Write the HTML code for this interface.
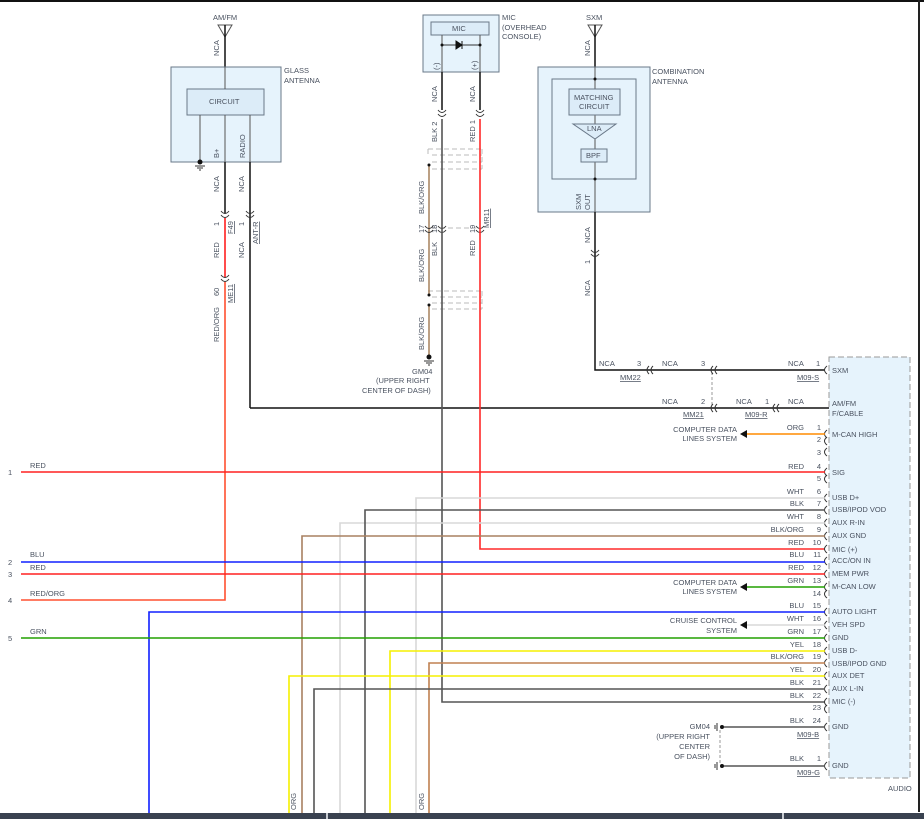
<!DOCTYPE html>
<html><head><meta charset="utf-8"><style>
html,body{margin:0;padding:0;background:#fff;}
svg{display:block;font-family:"Liberation Sans",sans-serif;}
text{fill:#4a5260;font-size:7.5px;}
</style></head><body>
<svg width="924" height="819" viewBox="0 0 924 819" xmlns="http://www.w3.org/2000/svg">
<rect x="0" y="0" width="924" height="2" fill="#111"/>
<rect x="918" y="0" width="2" height="812" fill="#222"/>

<!-- AM/FM antenna -->
<text x="213" y="20">AM/FM</text>
<path d="M218 25 L232 25 L225 37 Z" fill="none" stroke="#555" stroke-width="1"/>
<line x1="225" y1="25" x2="225" y2="67" stroke="#111" stroke-width="1.5"/>
<text transform="translate(219,56) rotate(-90)">NCA</text>
<!-- glass antenna -->
<rect x="171" y="67" width="110" height="95" fill="#e6f3fc" stroke="#6a7888"/>
<text x="284" y="73">GLASS</text><text x="284" y="83">ANTENNA</text>
<rect x="187" y="89" width="77" height="26" fill="#dcecf8" stroke="#6a7888"/>
<text x="209" y="104">CIRCUIT</text>
<line x1="225" y1="67" x2="225" y2="89" stroke="#555"/>
<line x1="200" y1="115" x2="200" y2="162" stroke="#555"/>
<line x1="225" y1="115" x2="225" y2="162" stroke="#555"/>
<line x1="250" y1="115" x2="250" y2="162" stroke="#555"/>
<circle cx="200" cy="162" r="2.5" fill="#111"/>
<path d="M195 166 H205 M197 168 H203 M199 170 H201" stroke="#333"/>
<text transform="translate(219,158) rotate(-90)">B+</text>
<text transform="translate(245,158) rotate(-90)">RADIO</text>
<line x1="225" y1="162" x2="225" y2="213" stroke="#111" stroke-width="1.5"/>
<line x1="250" y1="162" x2="250" y2="408" stroke="#111" stroke-width="1.5"/>
<text transform="translate(219,192) rotate(-90)">NCA</text>
<text transform="translate(244,192) rotate(-90)">NCA</text>
<path d="M221 211 Q225 216 229 211 M221 215 Q225 220 229 215 M246 211 Q250 216 254 211 M246 215 Q250 220 254 215" fill="none" stroke="#333"/>
<text transform="translate(219,226) rotate(-90)">1</text>
<text transform="translate(244,226) rotate(-90)">1</text>
<text transform="translate(233,234) rotate(-90)" text-decoration="underline">F49</text>
<text transform="translate(258,244) rotate(-90)" text-decoration="underline">ANT-R</text>
<line x1="225" y1="218" x2="225" y2="277" stroke="#ff2020" stroke-width="1.6"/>
<text transform="translate(219,258) rotate(-90)">RED</text>
<text transform="translate(244,258) rotate(-90)">NCA</text>
<path d="M221 275 Q225 280 229 275 M221 279 Q225 284 229 279" fill="none" stroke="#333"/>
<text transform="translate(219,296) rotate(-90)">60</text>
<text transform="translate(233,303) rotate(-90)" text-decoration="underline">ME11</text>
<text transform="translate(219,342) rotate(-90)">RED/ORG</text>
<path d="M225 282 V600 H21" fill="none" stroke="#ff5030" stroke-width="1.6"/>
<line x1="250" y1="408" x2="829" y2="408" stroke="#111" stroke-width="1.5"/>

<!-- MIC -->
<rect x="423" y="15" width="76" height="57" fill="#e6f3fc" stroke="#6a7888"/>
<rect x="431" y="22" width="58" height="13" fill="#dcecf8" stroke="#6a7888"/>
<text x="452" y="31">MIC</text>
<text x="502" y="20">MIC</text><text x="502" y="30">(OVERHEAD</text><text x="502" y="39">CONSOLE)</text>
<line x1="442" y1="35" x2="442" y2="72" stroke="#555"/>
<line x1="480" y1="35" x2="480" y2="72" stroke="#555"/>
<line x1="442" y1="45" x2="480" y2="45" stroke="#333"/>
<circle cx="442" cy="45" r="1.5" fill="#111"/><circle cx="480" cy="45" r="1.5" fill="#111"/>
<path d="M456 41 L462 45 L456 49 Z M462 41 V49" fill="#111" stroke="#111"/>
<text transform="translate(439,70) rotate(-90)">(-)</text>
<text transform="translate(477,70) rotate(-90)">(+)</text>
<line x1="442" y1="72" x2="442" y2="110" stroke="#111" stroke-width="1.5"/>
<line x1="480" y1="72" x2="480" y2="110" stroke="#111" stroke-width="1.5"/>
<text transform="translate(437,102) rotate(-90)">NCA</text>
<text transform="translate(475,102) rotate(-90)">NCA</text>
<path d="M438 110 Q442 115 446 110 M438 114 Q442 119 446 114 M476 110 Q480 115 484 110 M476 114 Q480 119 484 114" fill="none" stroke="#333"/>
<text transform="translate(437,142) rotate(-90)">BLK 2</text>
<text transform="translate(475,142) rotate(-90)">RED 1</text>
<g stroke="#bbb" stroke-dasharray="5,3" fill="none">
<path d="M428 149 H482 M432 155 H482 M432 162 H482 M432 169 H482 M482 149 V169 M428 149 V155"/>
<path d="M428 291 H482 M432 297 H482 M432 303 H482 M432 309 H482 M482 291 V309"/>
<path d="M432 228 H476"/>
</g>
<path d="M429 165 V295 M429 305 V355" stroke="#a07850" stroke-width="1.4"/>
<circle cx="429" cy="165" r="1.5" fill="#111"/><circle cx="429" cy="295" r="1.5" fill="#111"/><circle cx="429" cy="305" r="1.5" fill="#111"/>
<circle cx="429" cy="357" r="2.5" fill="#111"/>
<path d="M424 361 H434 M426 363 H432 M428 365 H430" stroke="#333"/>
<text transform="translate(424,214) rotate(-90)">BLK/ORG</text>
<text transform="translate(424,233) rotate(-90)">17</text>
<text transform="translate(437,233) rotate(-90)">18</text>
<text transform="translate(475,233) rotate(-90)">19</text>
<text transform="translate(489,228) rotate(-90)" text-decoration="underline">MR11</text>
<text transform="translate(424,282) rotate(-90)">BLK/ORG</text>
<text transform="translate(437,256) rotate(-90)">BLK</text>
<text transform="translate(475,256) rotate(-90)">RED</text>
<text transform="translate(424,350) rotate(-90)">BLK/ORG</text>
<path d="M425 226 Q429 231 433 226 M425 230 Q429 235 433 230 M438 226 Q442 231 446 226 M438 230 Q442 235 446 230 M476 226 Q480 231 484 226 M476 230 Q480 235 484 230" fill="none" stroke="#333"/>
<text x="412" y="374">GM04</text>
<text x="376" y="383">(UPPER RIGHT</text>
<text x="362" y="393">CENTER OF DASH)</text>
<path d="M442 119 V702 H825" fill="none" stroke="#555" stroke-width="1.6"/>
<path d="M480 119 V549 H825" fill="none" stroke="#ff2a2a" stroke-width="1.6"/>

<!-- SXM -->
<text x="586" y="20">SXM</text>
<path d="M588 25 L602 25 L595 37 Z" fill="none" stroke="#555"/>
<line x1="595" y1="25" x2="595" y2="67" stroke="#111" stroke-width="1.5"/>
<text transform="translate(590,56) rotate(-90)">NCA</text>
<rect x="538" y="67" width="112" height="145" fill="#e6f3fc" stroke="#6a7888"/>
<text x="652" y="74">COMBINATION</text><text x="652" y="84">ANTENNA</text>
<rect x="552" y="79" width="84" height="100" fill="#e6f3fc" stroke="#6a7888"/>
<line x1="595" y1="67" x2="595" y2="212" stroke="#555"/>
<circle cx="595" cy="79" r="1.5" fill="#111"/><circle cx="595" cy="179" r="1.5" fill="#111"/>
<rect x="569" y="89" width="51" height="26" fill="#dcecf8" stroke="#6a7888"/>
<text x="574" y="100">MATCHING</text><text x="579" y="109">CIRCUIT</text>
<path d="M573 124 H616 L595 139 Z" fill="#dcecf8" stroke="#6a7888"/>
<text x="587" y="131">LNA</text>
<rect x="581" y="149" width="26" height="13" fill="#dcecf8" stroke="#6a7888"/>
<text x="586" y="158">BPF</text>
<text transform="translate(581,210) rotate(-90)">SXM</text>
<text transform="translate(590,210) rotate(-90)">OUT</text>
<path d="M595 212 V370 H825" fill="none" stroke="#111" stroke-width="1.5"/>
<text transform="translate(590,243) rotate(-90)">NCA</text>
<path d="M591 250 Q595 255 599 250 M591 254 Q595 259 599 254" fill="none" stroke="#333"/>
<text transform="translate(590,264) rotate(-90)">1</text>
<text transform="translate(590,296) rotate(-90)">NCA</text>
<!-- connectors rows 370 & 408 -->
<text x="599" y="366">NCA</text><text x="637" y="366">3</text>
<text x="662" y="366">NCA</text><text x="701" y="366">3</text>
<text x="788" y="366">NCA</text><text x="816" y="366">1</text>
<text x="620" y="380" text-decoration="underline">MM22</text>
<text x="797" y="380" text-decoration="underline">M09-S</text>
<text x="662" y="404">NCA</text><text x="701" y="404">2</text>
<text x="736" y="404">NCA</text><text x="765" y="404">1</text>
<text x="788" y="404">NCA</text>
<text x="683" y="417" text-decoration="underline">MM21</text>
<text x="745" y="417" text-decoration="underline">M09-R</text>
<path d="M712 372 V406" stroke="#999" stroke-dasharray="3,2"/>
<path d="M649 366 Q645 370 649 374 M653 366 Q649 370 653 374 M713 366 Q709 370 713 374 M717 366 Q713 370 717 374 M713 404 Q709 408 713 412 M717 404 Q713 408 717 412 M775 404 Q771 408 775 412 M779 404 Q775 408 779 412" fill="none" stroke="#333"/>

<!-- AUDIO box -->
<rect x="829" y="357" width="81" height="421" fill="#e6f3fc" stroke="#999" stroke-dasharray="6,3"/>
<text x="888" y="791">AUDIO</text>
<g>
<text x="832" y="373">SXM</text>
<text x="832" y="406">AM/FM</text><text x="832" y="416">F/CABLE</text>
<text x="832" y="437">M-CAN HIGH</text>
<text x="832" y="475">SIG</text>
<text x="832" y="500">USB D+</text>
<text x="832" y="512">USB/IPOD VOD</text>
<text x="832" y="525">AUX R-IN</text>
<text x="832" y="538">AUX GND</text>
<text x="832" y="552">MIC (+)</text>
<text x="832" y="563">ACC/ON IN</text>
<text x="832" y="576">MEM PWR</text>
<text x="832" y="589">M-CAN LOW</text>
<text x="832" y="614">AUTO LIGHT</text>
<text x="832" y="627">VEH SPD</text>
<text x="832" y="640">GND</text>
<text x="832" y="653">USB D-</text>
<text x="832" y="666">USB/IPOD GND</text>
<text x="832" y="678">AUX DET</text>
<text x="832" y="691">AUX L-IN</text>
<text x="832" y="704">MIC (-)</text>
<text x="832" y="729">GND</text>
<text x="832" y="768">GND</text>
</g>
<!-- pin numbers and color labels -->
<g text-anchor="end">
<text x="821" y="430">1</text><text x="821" y="442">2</text><text x="821" y="455">3</text>
<text x="821" y="469">4</text><text x="821" y="481">5</text><text x="821" y="494">6</text>
<text x="821" y="506">7</text><text x="821" y="519">8</text><text x="821" y="532">9</text>
<text x="821" y="545">10</text><text x="821" y="557">11</text><text x="821" y="570">12</text>
<text x="821" y="583">13</text><text x="821" y="596">14</text><text x="821" y="608">15</text>
<text x="821" y="621">16</text><text x="821" y="634">17</text><text x="821" y="647">18</text>
<text x="821" y="659">19</text><text x="821" y="672">20</text><text x="821" y="685">21</text>
<text x="821" y="698">22</text><text x="821" y="710">23</text><text x="821" y="723">24</text>
<text x="821" y="761">1</text>
<text x="804" y="430">ORG</text><text x="804" y="469">RED</text><text x="804" y="494">WHT</text>
<text x="804" y="506">BLK</text><text x="804" y="519">WHT</text><text x="804" y="532">BLK/ORG</text>
<text x="804" y="545">RED</text><text x="804" y="557">BLU</text><text x="804" y="570">RED</text>
<text x="804" y="583">GRN</text><text x="804" y="608">BLU</text><text x="804" y="621">WHT</text>
<text x="804" y="634">GRN</text><text x="804" y="647">YEL</text><text x="804" y="659">BLK/ORG</text>
<text x="804" y="672">YEL</text><text x="804" y="685">BLK</text><text x="804" y="698">BLK</text>
<text x="804" y="723">BLK</text><text x="804" y="761">BLK</text>
<text x="737" y="432">COMPUTER DATA</text><text x="737" y="441">LINES SYSTEM</text>
<text x="737" y="585">COMPUTER DATA</text><text x="737" y="594">LINES SYSTEM</text>
<text x="737" y="623">CRUISE CONTROL</text><text x="737" y="633">SYSTEM</text>
<text x="710" y="729">GM04</text><text x="710" y="739">(UPPER RIGHT</text>
<text x="710" y="749">CENTER</text><text x="710" y="759">OF DASH)</text>
</g>
<text x="797" y="737" text-decoration="underline">M09-B</text>
<text x="797" y="775" text-decoration="underline">M09-G</text>
<!-- connector ( marks -->
<g fill="none" stroke="#333">
<path d="M827 366 Q822 370 827 374 M827 430 Q822 434 827 438 M827 437 Q822 441 827 445 M827 448 Q822 452 827 456 M827 468 Q822 472 827 476 M827 475 Q822 479 827 483 M827 494 Q822 498 827 502 M827 506 Q822 510 827 514 M827 519 Q822 523 827 527 M827 532 Q822 536 827 540 M827 545 Q822 549 827 553 M827 557 Q822 561 827 565 M827 570 Q822 574 827 578 M827 583 Q822 587 827 591 M827 590 Q822 594 827 598 M827 608 Q822 612 827 616 M827 621 Q822 625 827 629 M827 634 Q822 638 827 642 M827 647 Q822 651 827 655 M827 659 Q822 663 827 667 M827 672 Q822 676 827 680 M827 685 Q822 689 827 693 M827 698 Q822 702 827 706 M827 705 Q822 709 827 713 M827 723 Q822 727 827 731 M827 762 Q822 766 827 770"/>
</g>
<!-- arrows -->
<path d="M740 434 L747 430 L747 438 Z M740 587 L747 583 L747 591 Z M740 625 L747 621 L747 629 Z" fill="#111"/>
<line x1="747" y1="434" x2="825" y2="434" stroke="#ff8c00" stroke-width="1.6"/>
<line x1="747" y1="587" x2="825" y2="587" stroke="#22a000" stroke-width="1.6"/>
<line x1="747" y1="625" x2="825" y2="625" stroke="#d8d8d8" stroke-width="1.6"/>
<!-- ground symbols right -->
<path d="M720 730 V763" stroke="#999" stroke-dasharray="3,2"/>
<circle cx="722" cy="727" r="2" fill="#111"/><circle cx="722" cy="766" r="2" fill="#111"/>
<path d="M717 723 V731 M715 725 V729 M717 762 V770 M715 764 V768" stroke="#333"/>
<line x1="724" y1="727" x2="825" y2="727" stroke="#555" stroke-width="1.6"/>
<line x1="724" y1="766" x2="825" y2="766" stroke="#555" stroke-width="1.6"/>

<!-- left wires -->
<g stroke-width="1.6" fill="none">
<path d="M416 813 V498 H825" stroke="#d8d8d8"/>
<path d="M340 813 V523 H825" stroke="#d8d8d8"/>
<path d="M365 813 V510 H825" stroke="#555"/>
<path d="M302 813 V536 H825" stroke="#a88060"/>
<path d="M429 813 V663 H825" stroke="#c08050"/>
<path d="M390 813 V651 H825" stroke="#f5f000"/>
<path d="M289 813 V676 H825" stroke="#f5f000"/>
<path d="M314 813 V689 H825" stroke="#555"/>
<path d="M149 813 V612 H825" stroke="#1020ff"/>
<path d="M21 472 H825" stroke="#ff2020"/>
<path d="M21 562 H825" stroke="#1020ff"/>
<path d="M21 574 H825" stroke="#ff2020"/>
<path d="M21 638 H825" stroke="#22a000"/>
</g>
<text x="8" y="475">1</text><text x="8" y="565">2</text><text x="8" y="577">3</text><text x="8" y="603">4</text><text x="8" y="641">5</text>
<text x="30" y="468">RED</text><text x="30" y="557">BLU</text><text x="30" y="570">RED</text>
<text x="30" y="596">RED/ORG</text><text x="30" y="634">GRN</text>
<text transform="translate(296,810) rotate(-90)">ORG</text>
<text transform="translate(424,810) rotate(-90)">ORG</text>
<!-- bottom bar -->
<rect x="0" y="813" width="924" height="6" fill="#3a4250"/>
<rect x="326" y="813" width="2" height="6" fill="#c8ccd2"/>
<rect x="782" y="813" width="2" height="6" fill="#c8ccd2"/>
</svg>
</body></html>
